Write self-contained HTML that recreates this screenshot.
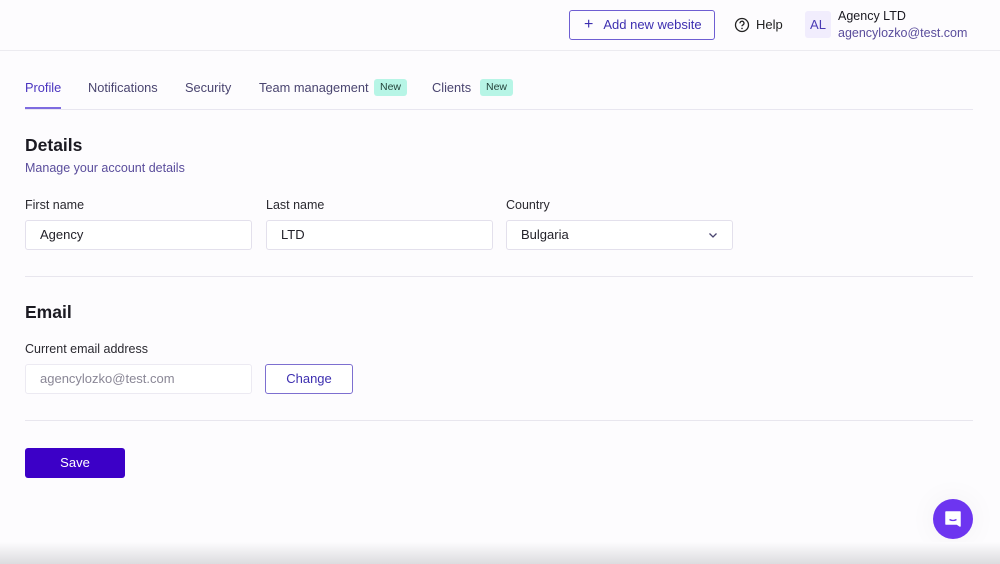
<!DOCTYPE html>
<html><head><style>
*{box-sizing:border-box;margin:0;padding:0}
body{width:1000px;height:564px;overflow:hidden;background:#fdfcfe;font-family:"Liberation Sans",sans-serif;position:relative;color:#1b1a22}
.a{position:absolute}
.inp{position:absolute;height:30px;border:1px solid #e3e0ec;border-radius:3px;background:#fff;font-size:13px;padding:0 0 0 14px;line-height:28px;color:#23222a}
.lbl{position:absolute;font-size:12.5px;color:#2a2930}
.tab{position:absolute;top:80px;font-size:12.8px;color:#4a4570}
.new{position:absolute;top:79px;height:17px;background:#b7f5e6;border-radius:3px;font-size:10.5px;color:#24433b;line-height:17px;padding:0 6px}
</style></head><body>
<div class="a" style="left:0;top:50px;width:1000px;height:1px;background:#ecebf0"></div>
<div class="a" style="left:569px;top:10px;width:146px;height:30px;border:1px solid #6e5ed2;border-radius:3px;color:#3d2fb0;font-size:13px;line-height:28px;padding-left:14px"><span style="font-size:16px;margin-right:10px">+</span>Add new website</div>
<svg class="a" style="left:734px;top:17px" width="16" height="16" viewBox="0 0 16 16"><circle cx="8" cy="8" r="6.5" fill="none" stroke="#222" stroke-width="1.3"/><path d="M6 6.3a2 2 0 1 1 2.6 1.8c-.5.2-.6.6-.6 1.1" fill="none" stroke="#222" stroke-width="1.3"/><circle cx="8" cy="11.4" r=".8" fill="#222"/></svg>
<div class="a" style="left:756px;top:17px;font-size:13px;color:#222">Help</div>
<div class="a" style="left:805px;top:11px;width:26px;height:27px;background:#f1edfd;border-radius:3px;color:#4b3bb5;font-size:13px;line-height:27px;text-align:center">AL</div>
<div class="a" style="left:838px;top:9px;font-size:12.5px;color:#1b1a22">Agency LTD</div>
<div class="a" style="left:838px;top:26px;font-size:12.5px;color:#5a4d9c">agencylozko@test.com</div>

<div class="tab" style="left:25px;color:#4b35c0">Profile</div>
<div class="a" style="left:25px;top:107px;width:36px;height:2px;background:#7e6be0"></div>
<div class="tab" style="left:88px">Notifications</div>
<div class="tab" style="left:185px">Security</div>
<div class="tab" style="left:259px">Team management</div>
<div class="new" style="left:374px">New</div>
<div class="tab" style="left:432px">Clients</div>
<div class="new" style="left:480px">New</div>
<div class="a" style="left:25px;top:109px;width:948px;height:1px;background:#e8e6f0"></div>

<div class="a" style="left:25px;top:135px;font-size:17.5px;font-weight:bold">Details</div>
<div class="a" style="left:25px;top:161px;font-size:12.5px;color:#5a4d9c">Manage your account details</div>
<div class="lbl" style="left:25px;top:198px">First name</div>
<div class="lbl" style="left:266px;top:198px">Last name</div>
<div class="lbl" style="left:506px;top:198px">Country</div>
<div class="inp" style="left:25px;top:220px;width:227px">Agency</div>
<div class="inp" style="left:266px;top:220px;width:227px">LTD</div>
<div class="inp" style="left:506px;top:220px;width:227px">Bulgaria
<svg class="a" style="right:14px;top:10px" width="10" height="8" viewBox="0 0 10 8"><path d="M1.5 2.5L5 6 8.5 2.5" fill="none" stroke="#4a4570" stroke-width="1.3"/></svg></div>
<div class="a" style="left:25px;top:276px;width:948px;height:1px;background:#e8e6ee"></div>

<div class="a" style="left:25px;top:302px;font-size:17.5px;font-weight:bold">Email</div>
<div class="lbl" style="left:25px;top:342px">Current email address</div>
<div class="inp" style="left:25px;top:364px;width:227px;color:#8a8796;border-color:#eceaf2">agencylozko@test.com</div>
<div class="a" style="left:265px;top:364px;width:88px;height:30px;border:1px solid #7d6fd0;border-radius:3px;color:#3d2fb0;font-size:13px;line-height:28px;text-align:center;background:#fff">Change</div>
<div class="a" style="left:25px;top:420px;width:948px;height:1px;background:#e8e6ee"></div>
<div class="a" style="left:25px;top:448px;width:100px;height:30px;background:#3c00c7;border-radius:3px;color:#fff;font-size:13px;line-height:30px;text-align:center">Save</div>

<div class="a" style="left:933px;top:499px;width:40px;height:40px;border-radius:50%;background:#6d35f0;box-shadow:0 0 30px rgba(0,0,0,.05)"></div>
<svg class="a" style="left:943px;top:509px" width="20" height="20" viewBox="0 0 20 20"><path d="M3 3h14v14l-3-2H3z" fill="#fff" stroke="#fff" stroke-linejoin="round" stroke-width="1.5"/><path d="M6.5 10.5q3.5 2 7 0" fill="none" stroke="#6d35f0" stroke-width="1.3"/></svg>
<div class="a" style="left:0;top:542px;width:1000px;height:22px;background:linear-gradient(#fdfcfe,#dcdcdf)"></div>
</body></html>
